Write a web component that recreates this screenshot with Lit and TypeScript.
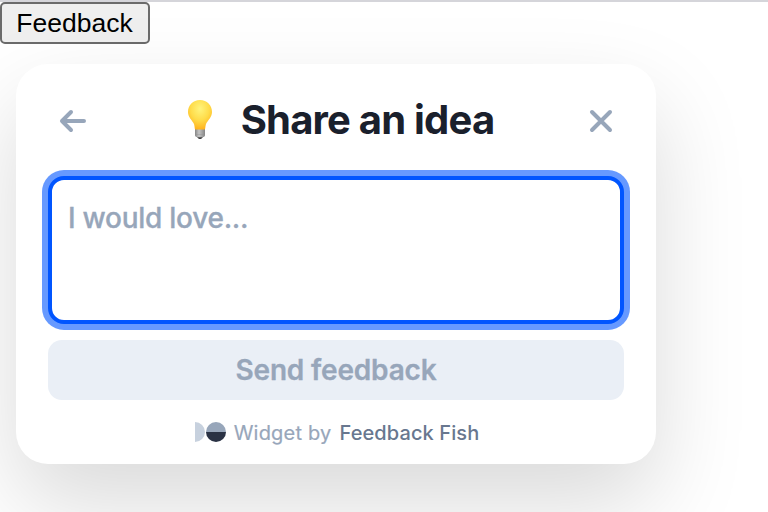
import { LitElement, html, css } from "lit";
import { customElement } from "lit/decorators.js";

@customElement("app-root")
export class AppRoot extends LitElement {
  static styles = css`
    :host {
      display: block;
      box-sizing: border-box;
      width: 768px;
      height: 512px;
      overflow: hidden;
      background: #fff;
      border-top: 2px solid #d5d5da;
      font-family: Inter, "Liberation Sans", sans-serif;
    }
    * { box-sizing: border-box; }
    button { margin: 0; padding: 0; border: 0; background: none; font-family: inherit; }
    .trigger {
      display: block;
      width: 150px;
      height: 42px;
      padding-right: 1px;
      border: 2px solid #6b6b6b;
      border-radius: 5px;
      background: #efefef;
      color: #000;
      font: 26.5px/38px "Liberation Sans", Arial, sans-serif;
    }
    .card {
      width: 640px;
      height: 400px;
      margin: 20px 0 0 16px;
      padding: 24px 32px 0;
      border-radius: 32px;
      background: #fff;
      box-shadow: 0 40px 92px rgba(0, 0, 0, 0.15);
    }
    header {
      display: flex;
      align-items: center;
      justify-content: space-between;
      height: 64px;
      padding: 0 8px 0 9px;
    }
    .icon { display: block; width: 32px; height: 32px; }
    .icon svg { display: block; }
    h1 {
      display: flex;
      align-items: center;
      gap: 28px;
      margin: 0 0 0 8px;
      color: #1a202c;
      font-size: 40px;
      line-height: 64px;
      font-weight: 700;
      letter-spacing: -0.8px;
      white-space: nowrap;
    }
    .bulb { display: block; }
    textarea {
      display: block;
      width: 576px;
      height: 148px;
      margin-top: 24px;
      padding: 16px 16px;
      resize: none;
      outline: none;
      border: 4px solid #0055ff;
      border-radius: 16px;
      background: #fff;
      box-shadow: 0 0 0 6px #6699ff;
      font: 500 28px/44px Inter, sans-serif;
      letter-spacing: -0.27px;
      -webkit-text-stroke: 0.3px #97a6ba;
      overflow: hidden;
    }
    textarea::placeholder { color: #97a6ba; opacity: 1; }
    .send {
      display: block;
      width: 576px;
      height: 60px;
      margin-top: 16px;
      border-radius: 14px;
      background: #eaeff6;
      color: #97a6ba;
      font-size: 28px;
      font-weight: 600;
      letter-spacing: -0.18px;
      -webkit-text-stroke: 0.3px #97a6ba;
      line-height: 60px;
    }
    footer {
      display: flex;
      align-items: center;
      justify-content: center;
      height: 64px;
      padding-left: 2px;
      color: #97a6ba;
      font-size: 20px;
      font-weight: 400;
      letter-spacing: 0.2px;
      white-space: nowrap;
    }
    footer span { position: relative; top: 1px; }
    .by { -webkit-text-stroke: 0.2px #97a6ba; }
    .mark { margin-right: 8px; }
    .brand { margin-left: 8px; color: #68778f; font-weight: 500; letter-spacing: 0.1px; }
  `;

  render() {
    return html`
      <button class="trigger">Feedback</button>
      <section class="card">
        <header>
          <button class="icon" aria-label="Back">
            <svg width="32" height="32" viewBox="0 0 32 32" fill="none" stroke="#97a6ba" stroke-width="4" stroke-linecap="round" stroke-linejoin="round">
              <path d="M27 17H5M14 8L5 17L14 26" />
            </svg>
          </button>
          <h1>
            <svg class="bulb" width="26" height="40" viewBox="0 0 26 40">
              <defs>
                <radialGradient id="glass" cx="50%" cy="30%" r="70%">
                  <stop offset="0" stop-color="#fff47c" />
                  <stop offset=".55" stop-color="#ffdc4a" />
                  <stop offset="1" stop-color="#ffb21d" />
                </radialGradient>
                <linearGradient id="base">
                  <stop offset="0" stop-color="#858585" />
                  <stop offset=".4" stop-color="#c4c4c4" />
                  <stop offset="1" stop-color="#858585" />
                </linearGradient>
              </defs>
              <path d="M8 28h10v7.500q0 1.500-3 2l-1 1h-2l-1-1q-3-.5-3-2z" fill="url(#base)" />
              <path d="M8 34.500h10" stroke="#909090" stroke-width=".4" />
              <path d="M10 37.300h6l-2 1.700h-2z" fill="#444" />
              <path d="M13 0C6 0 1 5 1 12c0 5 4 8 6 12 .8 2.500.6 5.500 1.400 5.500h9.200c.8 0 .6-3 1.400-5.500 2-4 6-7 6-12C25 5 20 0 13 0z" fill="url(#glass)" />
            </svg>
            <span>Share an idea</span>
          </h1>
          <button class="icon" aria-label="Close">
            <svg width="32" height="32" viewBox="0 0 32 32" fill="none" stroke="#97a6ba" stroke-width="4" stroke-linecap="round">
              <path d="M8 8L26 26M26 8L8 26" />
            </svg>
          </button>
        </header>
        <textarea placeholder="I would love..."></textarea>
        <button class="send">Send feedback</button>
        <footer>
          <svg class="mark" width="31" height="20" viewBox="0 0 31 20">
            <path d="M0 0a10 10 0 0 1 0 20z" fill="#c7d1de" />
            <path d="M11 10a10 10 0 0 1 20 0z" fill="#97a6ba" />
            <path d="M11 10a10 10 0 0 0 20 0z" fill="#2a3244" />
          </svg>
          <span class="by">Widget by</span><span class="brand">Feedback Fish</span>
        </footer>
      </section>
    `;
  }
}
